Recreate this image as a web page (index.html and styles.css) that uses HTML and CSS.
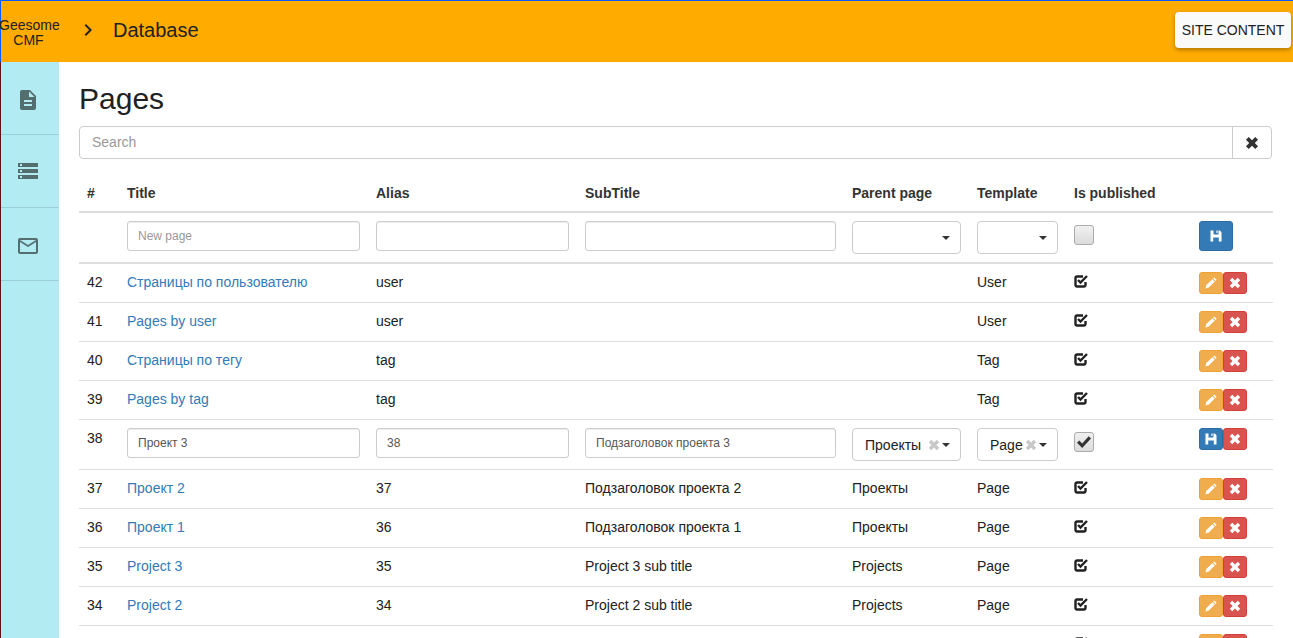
FILE: index.html
```html
<!DOCTYPE html>
<html lang="en">
<head>
	<meta charset="utf-8">
	<title>Geesome CMF - Database</title>
	<link rel="stylesheet" href="styles.css">
</head>

<body>
	<svg class="sprite">
		<symbol id="i-remove" viewBox="0 0 12 12"><path d="M.8 3.2 3.2.8 6 3.6 8.8.8 11.2 3.2 8.4 6 11.2 8.8 8.8 11.2 6 8.4 3.2 11.2.8 8.8 3.6 6z"/></symbol>
		<symbol id="i-pencil" viewBox="0 0 12 12"><path d="M9.2.4l2.4 2.4-1.1 1.1L8.1 1.5zM7.4 2.2l2.4 2.4-6 6-3.4.9.9-3.4z"/></symbol>
		<symbol id="i-save" viewBox="0 0 12 12"><path fill-rule="evenodd" d="M.5.5H9.8L11.5 2.2V11.5H.5ZM3.5.5V4.5H8.5V.5H7.6V3H6.4V.5ZM3.2 7.6V11.5H8.8V7.6Z"/></symbol>
		<symbol id="i-checked" viewBox="0 0 14 14"><path class="check-line" d="M11.5 8v3a1.5 1.5 0 0 1-1.5 1.5H3A1.5 1.5 0 0 1 1.5 11V4A1.5 1.5 0 0 1 3 2.5h6"/><path class="check-line" d="M4 6 6.5 8.5 13 2"/></symbol>
		<symbol id="i-tick" viewBox="0 0 16 16"><path d="M6.2 14 1 8.8 3.3 6.5 6.2 9.4 12.7 2.2 15 4.5z"/></symbol>
	</svg>

	<div class="app">
		<header class="topbar">
			<div class="logo">Geesome<br>CMF</div>
			<svg class="chevron" viewBox="0 0 24 24"><path d="M10 6L8.59 7.41 13.17 12l-4.58 4.59L10 18l6-6z"/></svg>
			<div class="crumb">Database</div>
			<button type="button" class="site-btn">SITE CONTENT</button>
		</header>

		<div class="body-row">
			<nav class="sidebar">
				<a class="side-item side-low"><svg viewBox="0 0 24 24"><path d="M14 2H6c-1.1 0-1.99.9-1.99 2L4 20c0 1.1.89 2 1.99 2H18c1.1 0 2-.9 2-2V8l-6-6zm2 16H8v-2h8v2zm0-4H8v-2h8v2zm-3-5V3.5L18.5 9H13z"/></svg></a>
				<a class="side-item"><svg viewBox="0 0 24 24"><path d="M2 20h20v-4H2v4zm2-3h2v2H4v-2zM2 4v4h20V4H2zm4 3H4V5h2v2zm-4 7h20v-4H2v4zm2-3h2v2H4v-2z"/></svg></a>
				<a class="side-item side-low"><svg viewBox="0 0 24 24"><path d="M20 4H4c-1.1 0-1.99.9-1.99 2L2 18c0 1.1.9 2 2 2h16c1.1 0 2-.9 2-2V6c0-1.1-.9-2-2-2zm0 14H4V8l8 5 8-5v10zm-8-7L4 6h16l-8 5z"/></svg></a>
			</nav>

			<main class="content">
				<h1>Pages</h1>

				<div class="search">
					<div class="search-input">Search</div>
					<div class="search-clear"><svg class="ico ico-14"><use href="#i-remove"/></svg></div>
				</div>

				<table class="pages">
					<colgroup>
						<col class="c-id"><col class="c-title"><col class="c-alias"><col class="c-sub"><col class="c-parent"><col class="c-tpl"><col class="c-pub"><col class="c-act">
					</colgroup>
					<thead>
						<tr><th>#</th><th>Title</th><th>Alias</th><th>SubTitle</th><th>Parent page</th><th>Template</th><th>Is published</th><th></th></tr>
					</thead>
					<tbody>
						<tr class="new-row">
							<td></td>
							<td><div class="field placeholder">New page</div></td>
							<td><div class="field"></div></td>
							<td><div class="field"></div></td>
							<td><div class="pick"><span class="caret"></span></div></td>
							<td><div class="pick"><span class="caret"></span></div></td>
							<td><div class="box"></div></td>
							<td><a class="btn btn-blue btn-big"><svg class="ico"><use href="#i-save"/></svg></a></td>
						</tr>
						<tr>
							<td>42</td><td><a class="link">Страницы по пользователю</a></td><td>user</td><td></td><td></td><td>User</td>
							<td><svg class="ico-check"><use href="#i-checked"/></svg></td>
							<td><div class="acts"><a class="btn btn-orange"><svg class="ico"><use href="#i-pencil"/></svg></a><a class="btn btn-red"><svg class="ico"><use href="#i-remove"/></svg></a></div></td>
						</tr>
						<tr>
							<td>41</td><td><a class="link">Pages by user</a></td><td>user</td><td></td><td></td><td>User</td>
							<td><svg class="ico-check"><use href="#i-checked"/></svg></td>
							<td><div class="acts"><a class="btn btn-orange"><svg class="ico"><use href="#i-pencil"/></svg></a><a class="btn btn-red"><svg class="ico"><use href="#i-remove"/></svg></a></div></td>
						</tr>
						<tr>
							<td>40</td><td><a class="link">Страницы по тегу</a></td><td>tag</td><td></td><td></td><td>Tag</td>
							<td><svg class="ico-check"><use href="#i-checked"/></svg></td>
							<td><div class="acts"><a class="btn btn-orange"><svg class="ico"><use href="#i-pencil"/></svg></a><a class="btn btn-red"><svg class="ico"><use href="#i-remove"/></svg></a></div></td>
						</tr>
						<tr>
							<td>39</td><td><a class="link">Pages by tag</a></td><td>tag</td><td></td><td></td><td>Tag</td>
							<td><svg class="ico-check"><use href="#i-checked"/></svg></td>
							<td><div class="acts"><a class="btn btn-orange"><svg class="ico"><use href="#i-pencil"/></svg></a><a class="btn btn-red"><svg class="ico"><use href="#i-remove"/></svg></a></div></td>
						</tr>
						<tr class="edit-row">
							<td>38</td>
							<td><div class="field">Проект 3</div></td>
							<td><div class="field">38</div></td>
							<td><div class="field">Подзаголовок проекта 3</div></td>
							<td><div class="pick"><span class="pick-text">Проекты</span><svg class="ico ico-clear"><use href="#i-remove"/></svg><span class="caret"></span></div></td>
							<td><div class="pick"><span class="pick-text">Page</span><svg class="ico ico-clear"><use href="#i-remove"/></svg><span class="caret"></span></div></td>
							<td><div class="box box-on"><svg class="ico-tick"><use href="#i-tick"/></svg></div></td>
							<td><div class="acts"><a class="btn btn-blue"><svg class="ico"><use href="#i-save"/></svg></a><a class="btn btn-red"><svg class="ico"><use href="#i-remove"/></svg></a></div></td>
						</tr>
						<tr>
							<td>37</td><td><a class="link">Проект 2</a></td><td>37</td><td>Подзаголовок проекта 2</td><td>Проекты</td><td>Page</td>
							<td><svg class="ico-check"><use href="#i-checked"/></svg></td>
							<td><div class="acts"><a class="btn btn-orange"><svg class="ico"><use href="#i-pencil"/></svg></a><a class="btn btn-red"><svg class="ico"><use href="#i-remove"/></svg></a></div></td>
						</tr>
						<tr>
							<td>36</td><td><a class="link">Проект 1</a></td><td>36</td><td>Подзаголовок проекта 1</td><td>Проекты</td><td>Page</td>
							<td><svg class="ico-check"><use href="#i-checked"/></svg></td>
							<td><div class="acts"><a class="btn btn-orange"><svg class="ico"><use href="#i-pencil"/></svg></a><a class="btn btn-red"><svg class="ico"><use href="#i-remove"/></svg></a></div></td>
						</tr>
						<tr>
							<td>35</td><td><a class="link">Project 3</a></td><td>35</td><td>Project 3 sub title</td><td>Projects</td><td>Page</td>
							<td><svg class="ico-check"><use href="#i-checked"/></svg></td>
							<td><div class="acts"><a class="btn btn-orange"><svg class="ico"><use href="#i-pencil"/></svg></a><a class="btn btn-red"><svg class="ico"><use href="#i-remove"/></svg></a></div></td>
						</tr>
						<tr>
							<td>34</td><td><a class="link">Project 2</a></td><td>34</td><td>Project 2 sub title</td><td>Projects</td><td>Page</td>
							<td><svg class="ico-check"><use href="#i-checked"/></svg></td>
							<td><div class="acts"><a class="btn btn-orange"><svg class="ico"><use href="#i-pencil"/></svg></a><a class="btn btn-red"><svg class="ico"><use href="#i-remove"/></svg></a></div></td>
						</tr>
						<tr class="cut-row">
							<td></td><td></td><td></td><td></td><td></td><td></td>
							<td><svg class="ico-check"><use href="#i-checked"/></svg></td>
							<td><div class="acts"><a class="btn btn-orange"><svg class="ico"><use href="#i-pencil"/></svg></a><a class="btn btn-red"><svg class="ico"><use href="#i-remove"/></svg></a></div></td>
						</tr>
					</tbody>
				</table>
			</main>
		</div>
	</div>
</body>
</html>
```

FILE: styles.css
```css
*{
	box-sizing: border-box;
	margin: 0px;
	padding: 0px;
}
html, body{
	height: 100%;
	overflow: hidden;
}
body{
	background-color: #FFF;
	color: #212121;
	font-family: "Liberation Sans", Arial, sans-serif;
	font-size: 14px;
	line-height: 20px;
}
.sprite{
	display: none;
}
.app{
	height: 100%;
	display: flex;
	flex-direction: column;
}

/* barra superior */
.topbar{
	height: 62px;
	flex: none;
	display: flex;
	align-items: center;
	background-color: #FFAB00;
	border-top: 1px solid #0A5CF5;
	border-left: 1px solid #0A5CF5;
	padding: 0px 2px 3px 0px;
}
.logo{
	width: 59px;
	margin-left: -2px;
	padding-top: 6px;
	font-size: 14px;
	line-height: 15px;
	text-align: center;
	white-space: nowrap;
}
.chevron{
	width: 24px;
	height: 24px;
	margin-left: 18px;
	fill: #212121;
}
.crumb{
	font-size: 20px;
	margin-left: 13px;
	flex: 1;
}
.site-btn{
	width: 116px;
	height: 36px;
	border: none;
	border-radius: 4px;
	background-color: #FAFAFA;
	color: #212121;
	font-family: inherit;
	font-size: 14px;
	box-shadow: 0 2px 4px rgba(0,0,0,0.3);
}

/* lateral */
.body-row{
	flex: 1;
	display: flex;
	min-height: 0;
}
.sidebar{
	width: 59px;
	flex: none;
	background-color: #B2EBF2;
	border-left: 1px solid #5A1414;
}
.side-item{
	height: 73px;
	display: flex;
	align-items: center;
	padding-left: 15px;
	border-bottom: 1px solid #9CCFD5;
}
.side-low{
	padding-top: 4px;
}
.side-item svg{
	width: 24px;
	height: 24px;
	fill: #546E70;
}

/* contenido */
.content{
	flex: 1;
	min-width: 0;
	padding: 20px 20px 0px 20px;
}
h1{
	font-size: 30px;
	font-weight: 400;
	line-height: 33px;
	margin-bottom: 11px;
}
.search{
	display: flex;
	height: 33px;
	margin-right: 1px;
	border: 1px solid #CCC;
	border-radius: 4px;
}
.search-input{
	flex: 1;
	padding: 0px 12px;
	line-height: 31px;
	color: #999;
}
.search-clear{
	width: 39px;
	display: flex;
	align-items: center;
	justify-content: center;
	border-left: 1px solid #CCC;
}
.ico{
	width: 12px;
	height: 12px;
	display: block;
	fill: #FFF;
}
.ico-14{
	width: 14px;
	height: 14px;
	fill: #333;
}

/* tabla */
.pages{
	width: 100%;
	margin-top: 16px;
	table-layout: fixed;
	border-collapse: collapse;
}
.c-id{ width: 40px; }
.c-title{ width: 249px; }
.c-alias{ width: 209px; }
.c-sub{ width: 267px; }
.c-parent{ width: 125px; }
.c-tpl{ width: 97px; }
.c-pub{ width: 125px; }
.pages th{
	text-align: left;
	padding: 8px;
	font-weight: 700;
	color: #333;
	border-bottom: 2px solid #DDD;
}
.pages td{
	padding: 8px;
	vertical-align: top;
	border-top: 1px solid #DDD;
}
.pages .new-row td{
	border-bottom: 2px solid #DDD;
}
.link{
	color: #337AB7;
}
.field{
	height: 30px;
	padding: 0px 10px;
	border: 1px solid #CCC;
	border-radius: 3px;
	font-size: 12px;
	line-height: 28px;
	color: #555;
	box-shadow: inset 0 1px 1px rgba(0,0,0,0.07);
}
.placeholder{
	color: #999;
}
.pick{
	height: 33px;
	display: flex;
	align-items: center;
	justify-content: flex-end;
	padding: 0px 10px 0px 12px;
	border: 1px solid #CCC;
	border-radius: 4px;
}
.pick-text{
	flex: 1;
}
.ico-clear{
	fill: #C8C8C8;
	margin-right: 2px;
}
.caret{
	width: 0px;
	height: 0px;
	border-top: 4px solid #333;
	border-left: 4px solid transparent;
	border-right: 4px solid transparent;
}
.box{
	width: 20px;
	height: 20px;
	margin-top: 4px;
	border: 1px solid #ABABAB;
	border-radius: 3px;
	background: linear-gradient(#F0F0F0, #DCDCDC);
}
.box-on{
	display: flex;
	align-items: center;
	justify-content: center;
}
.ico-tick{
	width: 16px;
	height: 16px;
	fill: #333;
}
.ico-check{
	width: 14px;
	height: 14px;
	display: block;
	margin-top: 2px;
}
.check-line{
	fill: none;
	stroke: #212121;
	stroke-width: 2.4;
}
.acts{
	display: flex;
}
.btn{
	width: 24px;
	height: 22px;
	display: flex;
	align-items: center;
	justify-content: center;
	border-radius: 3px;
	border: 1px solid transparent;
}
.btn-big{
	width: 34px;
	height: 30px;
}
.btn-blue{
	background-color: #337AB7;
	border-color: #2E6DA4;
}
.btn-orange{
	background-color: #F0AD4E;
	border-color: #EEA236;
}
.btn-red{
	background-color: #D9534F;
	border-color: #D43F3A;
}
```
